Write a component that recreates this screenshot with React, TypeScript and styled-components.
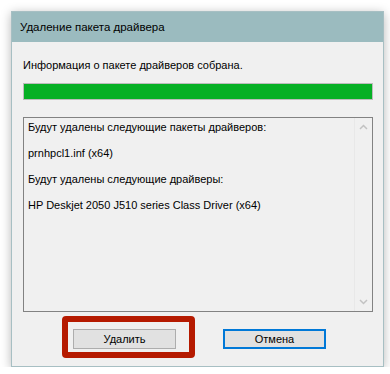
import React from "react";
import styled, { createGlobalStyle } from "styled-components";

const GlobalStyle = createGlobalStyle`
  html, body {
    margin: 0;
    padding: 0;
    background: #ffffff;
  }
  body {
    font-family: "Liberation Sans", Arial, sans-serif;
    font-size: 11px;
    color: #000;
  }
`;

const Window = styled.div`
  margin: 11px 0 0 11px;
  width: 373px;
  height: 356px;
  box-sizing: border-box;
  border: 1px solid #a7bfc3;
  background: #f0f0f0;
  box-shadow: 0 2px 10px rgba(0, 0, 0, 0.28);
  display: flex;
  flex-direction: column;
`;

const TitleBar = styled.div`
  height: 30px;
  background: #9bbbbf;
  display: flex;
  align-items: center;
  padding-left: 8px;
  font-size: 11.5px;
  flex-shrink: 0;
`;

const Body = styled.div`
  flex: 1;
  display: flex;
  flex-direction: column;
  padding: 0 10px 0 11px;
`;

const Status = styled.div`
  margin-top: 16px;
  line-height: 15px;
`;

const Progress = styled.div`
  margin-top: 10px;
  height: 17px;
  box-sizing: border-box;
  border: 1px solid #bcbcbc;
  background: #e6e6e6;
`;

const ProgressFill = styled.div`
  height: 100%;
  background: #06b025;
`;

const ListBox = styled.div`
  margin-top: 17px;
  height: 195px;
  box-sizing: border-box;
  border: 1px solid #828282;
  display: flex;
`;

const ListContent = styled.div`
  flex: 1;
  display: flex;
  flex-direction: column;
  gap: 10px;
  padding: 1px 0 0 4px;
`;

const ListLine = styled.div`
  line-height: 16px;
  white-space: nowrap;
`;

const ScrollTrack = styled.div`
  width: 17px;
  border-left: 1px solid #e8e8e8;
  display: flex;
  flex-direction: column;
  justify-content: space-between;
  align-items: center;
  padding: 6px 0;
`;

const Buttons = styled.div`
  margin-top: 17px;
  display: flex;
  gap: 47px;
  padding-left: 50px;
`;

const ButtonSlot = styled.div`
  position: relative;
`;

const Button = styled.button<{ $focused?: boolean }>`
  width: 103px;
  height: 20px;
  box-sizing: border-box;
  margin: 0;
  padding: 0;
  font-family: inherit;
  font-size: 11px;
  color: #000;
  background: #e1e1e1;
  border: ${(p) => (p.$focused ? "2px solid #0078d7" : "1px solid #adadad")};
`;

const Highlight = styled.div`
  position: absolute;
  top: -13px;
  left: -11px;
  right: -19px;
  bottom: -9px;
  border: 6px solid #b51a00;
  border-radius: 4px;
  pointer-events: none;
`;

const Chevron = ({ up }: { up?: boolean }) => (
  <svg width="9" height="6" viewBox="0 0 9 6">
    <path
      d={up ? "M1 5 L4.5 1.5 L8 5" : "M1 1 L4.5 4.5 L8 1"}
      fill="none"
      stroke="#c2c2c2"
      strokeWidth="1.5"
    />
  </svg>
);

const lines = [
  "Будут удалены следующие пакеты драйверов:",
  "prnhpcl1.inf (x64)",
  "Будут удалены следующие драйверы:",
  "HP Deskjet 2050 J510 series Class Driver (x64)",
];

export default function App() {
  return (
    <>
      <GlobalStyle />
      <Window>
        <TitleBar>Удаление пакета драйвера</TitleBar>
        <Body>
          <Status>Информация о пакете драйверов собрана.</Status>
          <Progress>
            <ProgressFill style={{ width: "100%" }} />
          </Progress>
          <ListBox>
            <ListContent>
              {lines.map((l) => (
                <ListLine key={l}>{l}</ListLine>
              ))}
            </ListContent>
            <ScrollTrack>
              <Chevron up />
              <Chevron />
            </ScrollTrack>
          </ListBox>
          <Buttons>
            <ButtonSlot>
              <Button>Удалить</Button>
              <Highlight />
            </ButtonSlot>
            <ButtonSlot>
              <Button $focused>Отмена</Button>
            </ButtonSlot>
          </Buttons>
        </Body>
      </Window>
    </>
  );
}
